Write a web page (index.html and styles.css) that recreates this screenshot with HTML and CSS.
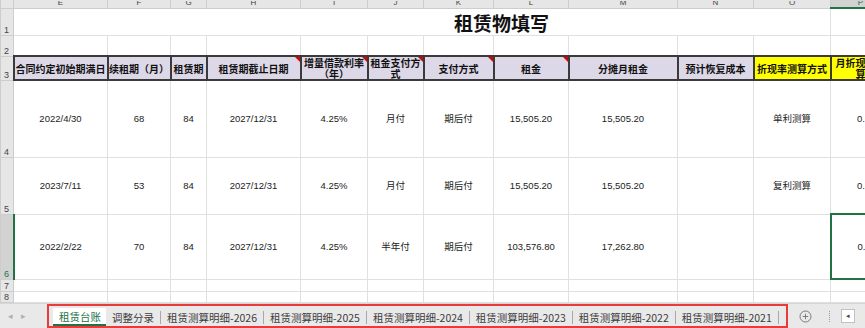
FILE: index.html
```html
<!DOCTYPE html>
<html lang="zh-CN">

<head>
  <meta charset="UTF-8" />
  <title>租赁物填写</title>
  <link rel="stylesheet" href="styles.css">
</head>

<body>
  <div class="workbook">
    <!-- Sheet grid -->
    <div class="sheet">
      <table class="grid">
        <colgroup>
          <col class="c-rh">
          <col class="c-e">
          <col class="c-f">
          <col class="c-g">
          <col class="c-h">
          <col class="c-i">
          <col class="c-j">
          <col class="c-k">
          <col class="c-l">
          <col class="c-m">
          <col class="c-n">
          <col class="c-o">
          <col class="c-p">
        </colgroup>
        <thead>
          <tr class="col-heads">
            <th class="corner"></th>
            <th><div class="letter">E</div></th>
            <th><div class="letter">F</div></th>
            <th><div class="letter">G</div></th>
            <th><div class="letter">H</div></th>
            <th><div class="letter">I</div></th>
            <th><div class="letter">J</div></th>
            <th><div class="letter">K</div></th>
            <th><div class="letter">L</div></th>
            <th><div class="letter">M</div></th>
            <th><div class="letter">N</div></th>
            <th><div class="letter">O</div></th>
            <th class="col-active"><div class="letter">P</div></th>
          </tr>
        </thead>
        <tbody>
          <tr class="r1">
            <th class="rh">1</th>
            <td colspan="11" class="title">租赁物填写</td>
            <td></td>
          </tr>
          <tr class="r2">
            <th class="rh">2</th>
            <td></td><td></td><td></td><td></td><td></td><td></td>
            <td></td><td></td><td></td><td></td><td></td><td></td>
          </tr>
          <tr class="r3">
            <th class="rh">3</th>
            <td class="head">合同约定初始期满日</td>
            <td class="head">续租期（月）</td>
            <td class="head">租赁期</td>
            <td class="head note">租赁期截止日期</td>
            <td class="head note wrap">增量借款利率（年）</td>
            <td class="head note wrap">租金支付方式</td>
            <td class="head note">支付方式</td>
            <td class="head note">租金</td>
            <td class="head">分摊月租金</td>
            <td class="head">预计恢复成本</td>
            <td class="head yellow">折现率测算方式</td>
            <td class="head yellow wrap">月折现率测算</td>
          </tr>
          <tr class="r4">
            <th class="rh">4</th>
            <td>2022/4/30</td>
            <td>68</td>
            <td>84</td>
            <td>2027/12/31</td>
            <td>4.25%</td>
            <td>月付</td>
            <td>期后付</td>
            <td>15,505.20</td>
            <td>15,505.20</td>
            <td></td>
            <td>单利测算</td>
            <td class="pcol">0.0035</td>
          </tr>
          <tr class="r5">
            <th class="rh">5</th>
            <td>2023/7/11</td>
            <td>53</td>
            <td>84</td>
            <td>2027/12/31</td>
            <td>4.25%</td>
            <td>月付</td>
            <td>期后付</td>
            <td>15,505.20</td>
            <td>15,505.20</td>
            <td></td>
            <td>复利测算</td>
            <td class="pcol">0.0035</td>
          </tr>
          <tr class="r6">
            <th class="rh row-active">6</th>
            <td>2022/2/22</td>
            <td>70</td>
            <td>84</td>
            <td>2027/12/31</td>
            <td>4.25%</td>
            <td>半年付</td>
            <td>期后付</td>
            <td>103,576.80</td>
            <td>17,262.80</td>
            <td></td>
            <td></td>
            <td class="pcol selected">0.0035</td>
          </tr>
          <tr class="r7">
            <th class="rh">7</th>
            <td></td><td></td><td></td><td></td><td></td><td></td>
            <td></td><td></td><td></td><td></td><td></td><td></td>
          </tr>
          <tr class="r8">
            <th class="rh">8</th>
            <td></td><td></td><td></td><td></td><td></td><td></td>
            <td></td><td></td><td></td><td></td><td></td><td></td>
          </tr>
          <tr class="r9">
            <th class="rh">9</th>
            <td></td><td></td><td></td><td></td><td></td><td></td>
            <td></td><td></td><td></td><td></td><td></td><td></td>
          </tr>
        </tbody>
      </table>
    </div>

    <!-- Sheet tabs -->
    <div class="tabbar">
      <div class="tab-nav">
        <span class="nav-arrow">&#9666;</span>
        <span class="nav-arrow">&#9656;</span>
      </div>
      <div class="tabs">
        <div class="tab active">租赁台账</div>
        <div class="tab">调整分录</div>
        <div class="tab">租赁测算明细-2026</div>
        <div class="tab">租赁测算明细-2025</div>
        <div class="tab">租赁测算明细-2024</div>
        <div class="tab">租赁测算明细-2023</div>
        <div class="tab">租赁测算明细-2022</div>
        <div class="tab">租赁测算明细-2021</div>
      </div>
      <div class="tab-add">
        <svg width="13" height="13" viewBox="0 0 13 13">
          <circle cx="6.5" cy="6.5" r="5.5" fill="none" stroke="#7a7a7a" stroke-width="1" />
          <path d="M6.5 3.8v5.4M3.8 6.5h5.4" stroke="#7a7a7a" stroke-width="1" />
        </svg>
      </div>
      <div class="tab-dots"></div>
      <div class="hscroll">
        <span class="scroll-btn">&#9666;</span>
      </div>
    </div>
  </div>
</body>

</html>
```

FILE: styles.css
```css
* {
  box-sizing: border-box;
}

html,
body {
  margin: 0;
  padding: 0;
  width: 865px;
  height: 328px;
  overflow: hidden;
  background: #fff;
  font-family: 'Liberation Sans', 'Noto Sans CJK SC', sans-serif;
}

.workbook {
  display: flex;
  flex-direction: column;
  height: 328px;
}

/* Sheet grid */
.sheet {
  flex: none;
  height: 303px;
  overflow: hidden;
}

.grid {
  border-collapse: collapse;
  table-layout: fixed;
  width: 890px;
}

.c-rh { width: 13px; }
.c-e { width: 94px; }
.c-f { width: 63px; }
.c-g { width: 36px; }
.c-h { width: 94px; }
.c-i { width: 67px; }
.c-j { width: 56px; }
.c-k { width: 70px; }
.c-l { width: 75px; }
.c-m { width: 109px; }
.c-n { width: 76px; }
.c-o { width: 77px; }
.c-p { width: 60px; }

.grid td {
  border: 1px solid #e0e0e0;
  padding: 0;
  text-align: center;
  vertical-align: middle;
  font-size: 9.5px;
  line-height: 11px;
  color: #1c1c1c;
  white-space: nowrap;
  overflow: hidden;
}

.col-heads th {
  height: 8px;
  padding: 0;
  background: #e6e6e6;
  border: 1px solid #cdcdcd;
  border-top: none;
  font-weight: normal;
}

.letter {
  height: 6px;
  overflow: hidden;
  font-size: 8px;
  line-height: 3px;
  color: #444;
}

.col-heads .col-active {
  background: #d2d2d2;
  border-bottom: 2px solid #217346;
}

.col-active .letter {
  color: #217346;
}

.rh {
  padding: 0 0 0 3px;
  background: #e6e6e6;
  border: 1px solid #cdcdcd;
  text-align: left;
  vertical-align: bottom;
  font-size: 9px;
  font-weight: normal;
  line-height: 9px;
  color: #444;
  overflow: hidden;
}

.rh.row-active {
  background: #d2d2d2;
  border-right: 2px solid #217346;
  color: #217346;
}

.r1 { height: 27px; }
.r2 { height: 21px; }
.r3 { height: 24px; }
.r4 { height: 77px; }
.r5 { height: 57px; }
.r6 { height: 65px; }
.r7 { height: 12px; }
.r8 { height: 11px; }
.r9 { height: 12px; }

.grid td.title {
  padding: 2px 0 0 440px;
  text-align: left;
  font-family: 'Noto Sans CJK SC', sans-serif;
  font-size: 19px;
  font-weight: 700;
  line-height: 22px;
  color: #111;
}

/* Header row */
.grid td.head {
  position: relative;
  border: 2px solid #3a3a3a;
  background: #ddd8e8;
  font-family: 'Noto Sans CJK SC', sans-serif;
  font-size: 10px;
  font-weight: 700;
  line-height: 11px;
  color: #111;
}

.grid td.wrap {
  white-space: normal;
}

.grid td.yellow {
  background: #ffff00;
}

.note::after {
  content: "";
  position: absolute;
  top: 0;
  right: 0;
  border-top: 5px solid #e00000;
  border-left: 5px solid transparent;
}

.grid td.pcol {
  padding-left: 26px;
  text-align: left;
}

.grid td.selected {
  border: 2px solid #217346;
}

/* Sheet tabs */
.tabbar {
  flex: none;
  display: flex;
  align-items: stretch;
  height: 25px;
  background: #e9e9e9;
  border-top: 1px solid #d6d6d6;
}

.tab-nav {
  display: flex;
  align-items: center;
  gap: 8px;
  width: 47px;
  padding-left: 8px;
}

.nav-arrow {
  font-size: 9px;
  color: #b0b0b0;
}

.tabs {
  display: flex;
  align-items: stretch;
  width: 741px;
  padding: 2px 0 0 4px;
  border: 2px solid #ea3b3b;
}

.tab {
  display: flex;
  align-items: center;
  padding: 0 6px;
  font-family: 'Noto Sans CJK SC', sans-serif;
  font-size: 10.5px;
  color: #3c3c3c;
  white-space: nowrap;
}

.tab:not(.active)::after {
  content: "";
  width: 1px;
  height: 13px;
  margin-left: 6px;
  margin-right: -6px;
  background: #a8a8a8;
}

.tab.active {
  background: #fff;
  color: #217346;
  border-bottom: 2px solid #217346;
  padding: 0 5px 0 6px;
}

.tab-add {
  display: flex;
  align-items: center;
  padding-left: 11px;
  width: 36px;
}

.tab-dots {
  align-self: center;
  width: 1px;
  height: 11px;
  margin-left: 5px;
  border-left: 1px dotted #9a9a9a;
}

.hscroll {
  display: flex;
  align-items: center;
  flex: 1;
  padding-left: 11px;
}

.scroll-btn {
  display: flex;
  align-items: center;
  justify-content: center;
  width: 14px;
  height: 14px;
  background: #fff;
  border: 1px solid #c2c2c2;
  font-size: 7px;
  color: #444;
}
```
